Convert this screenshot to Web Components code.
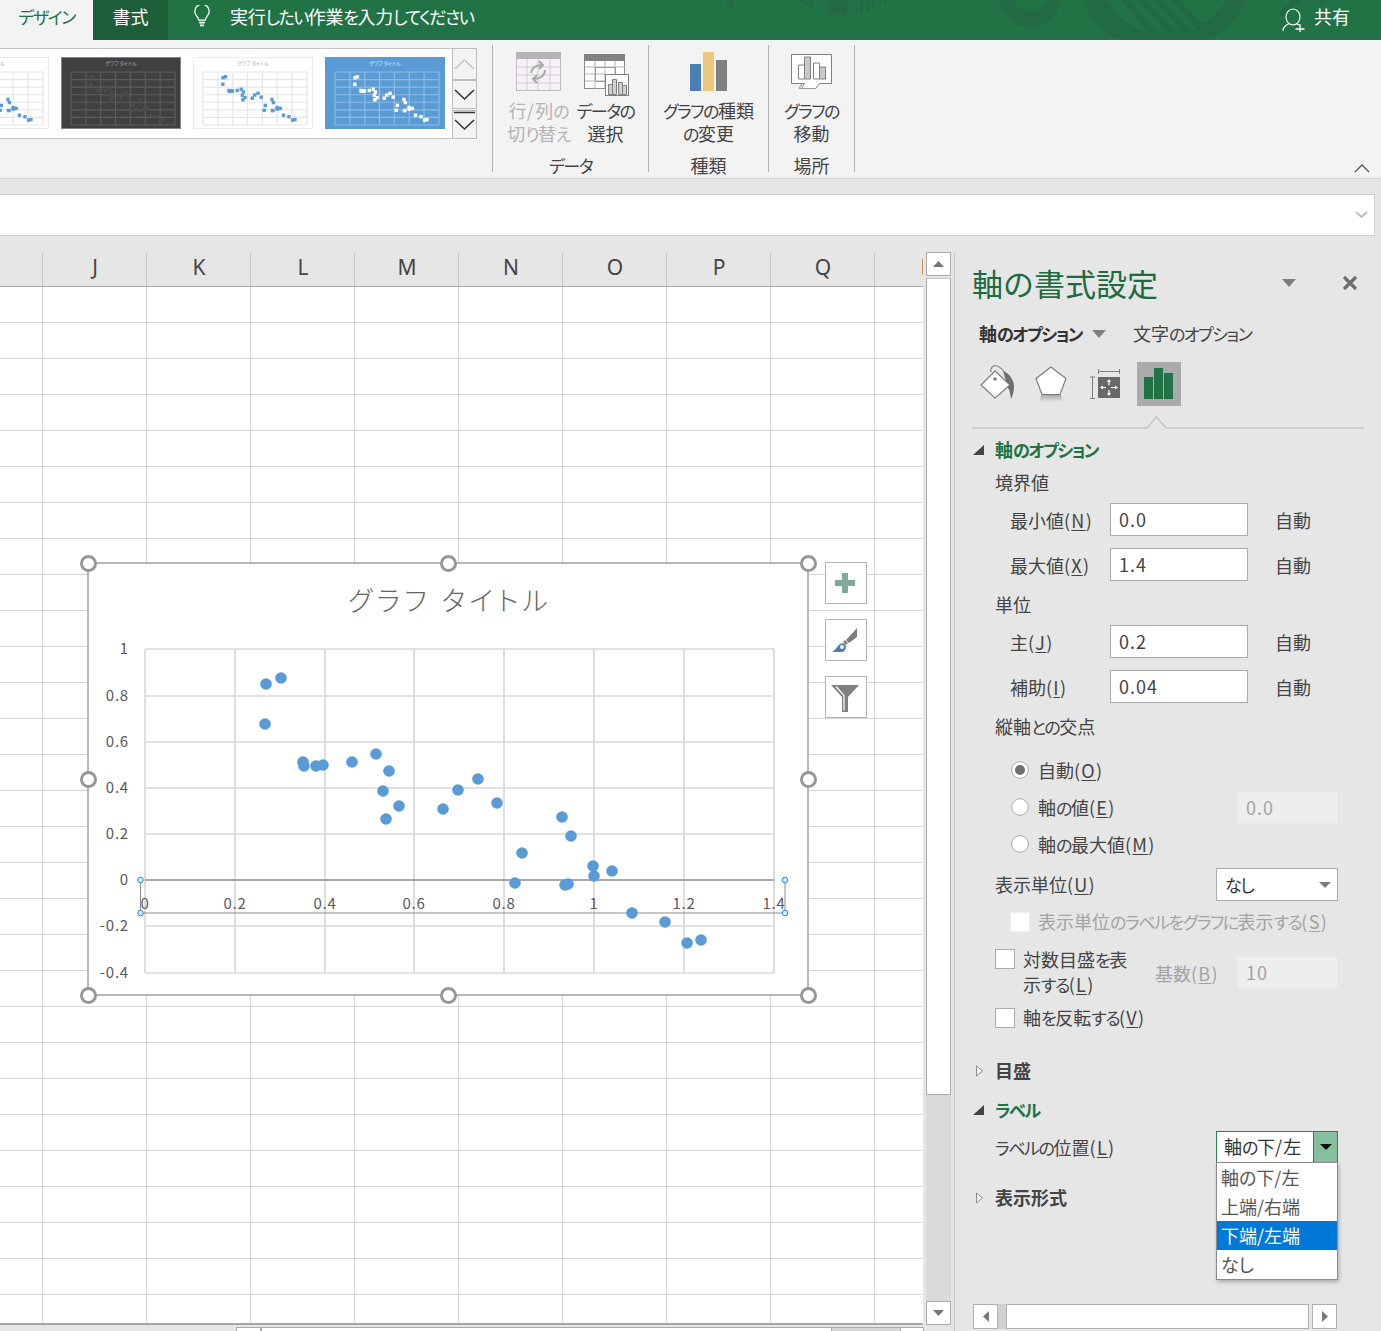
<!DOCTYPE html>
<html lang="ja">
<head>
<meta charset="utf-8">
<title>軸の書式設定</title>
<style>
html, body { margin: 0; height: 100%; overflow: hidden; }
body {
  background: #e6e6e6;
  color: #444;
  font-family: "Noto Sans CJK JP", "Noto Sans", sans-serif;
  font-feature-settings: "palt";
  font-size: 18px;
}
u { text-underline-offset: 2px; }
</style>
</head>
<body>

<x-app>
  <x-titlebar slot="top"></x-titlebar>
  <x-ribbon slot="top"></x-ribbon>
  <x-formula slot="top"></x-formula>
  <x-sheet slot="left"><x-chart></x-chart></x-sheet>
  <x-vscroll slot="left"></x-vscroll>
  <x-sheet-tabs slot="left"></x-sheet-tabs>
  <x-pane slot="right">
    <x-pane-head></x-pane-head>
    <x-section open green style="margin-top:9px">軸のオプション</x-section>
    <x-line style="margin-top:9px">境界値</x-line>
    <x-field value="0.0" style="margin-top:8px">最小値(<u>N</u>)</x-field>
    <x-field value="1.4" style="margin-top:12px">最大値(<u>X</u>)</x-field>
    <x-line style="margin-top:12px">単位</x-line>
    <x-field value="0.2" style="margin-top:8px">主(<u>J</u>)</x-field>
    <x-field value="0.04" style="margin-top:12px">補助(<u>I</u>)</x-field>
    <x-line style="margin-top:12px">縦軸との交点</x-line>
    <x-radio checked style="margin-top:13px">自動(<u>O</u>)</x-radio>
    <x-radio value="0.0" style="margin-top:1px">軸の値(<u>E</u>)</x-radio>
    <x-radio style="margin-top:1px">軸の最大値(<u>M</u>)</x-radio>
    <x-select value="なし" style="margin-top:6px">表示単位(<u>U</u>)</x-select>
    <x-check disabled style="margin-top:7px">表示単位のラベルをグラフに表示する(<u>S</u>)</x-check>
    <x-log-row style="margin-top:12px"></x-log-row>
    <x-check style="margin-top:8px;margin-left:23px">軸を反転する(<u>V</u>)</x-check>
    <x-section style="margin-top:27px">目盛</x-section>
    <x-section open green style="margin-top:15px">ラベル</x-section>
    <x-select value="軸の下/左" open style="margin-top:9px">ラベルの位置(<u>L</u>)</x-select>
    <x-section style="margin-top:23px">表示形式</x-section>
    <x-hscroll></x-hscroll>
  </x-pane>
</x-app>

<script>
// page coordinates of the scatter points, read off the screenshot
const POINTS = [[266,684],[281,678],[265,724],[303,762],[304,766],[316,766],[323,765],[352,762],[376,754],[389,771],[383,791],[399,806],[386,819],[443,809],[458,790],[478,779],[497,803],[562,817],[571,836],[522,853],[515,883],[565,885],[568,884],[593,866],[594,876],[612,871],[632,913],[665,922],[687,943],[701,940]];
const GRID_X = [145,235,325,414,504,594,684,774];
const GRID_Y = [649,696,742,788,834,880,926,973];

// the reference font has narrow kana and wide brackets, so tighten those runs
function narrow(root) {
  const walker = document.createTreeWalker(root, NodeFilter.SHOW_TEXT);
  const nodes = [];
  while (walker.nextNode()) nodes.push(walker.currentNode);
  for (const node of nodes) {
    const parent = node.parentElement;
    if (parent && parent.closest("style,script,svg,.raw")) continue;
    if (!/[\u3041-\u30ff()\/A-Z]/.test(node.data)) continue;
    const frag = document.createDocumentFragment();
    for (const part of node.data.split(/([\u3041-\u30ff]+|[()\/A-Z]+)/)) {
      if (!part) continue;
      if (/^[\u3041-\u30ff]/.test(part)) {
        const s = document.createElement("span");
        s.style.cssText = "font-size:.95em;letter-spacing:-.09em";
        s.textContent = part;
        frag.append(s);
      } else if (/^[()\/A-Z]/.test(part)) {
        const s = document.createElement("span");
        s.style.letterSpacing = ".07em";
        s.textContent = part;
        frag.append(s);
      } else {
        frag.append(part);
      }
    }
    node.replaceWith(frag);
  }
}

function define(name, html, setup) {
  customElements.define(name, class extends HTMLElement {
    constructor() {
      super();
      this.attachShadow({ mode: "open" });
    }
    connectedCallback() {
      this.shadowRoot.innerHTML = typeof html === "function" ? html(this) : html;
      narrow(this.shadowRoot);
      if (setup) setup(this);
    }
  });
}

define("x-app", `<style>
:host { display: flex; flex-direction: column; width: 1381px; height: 1331px; overflow: hidden; }
#main { display: flex; flex: 1; padding-top: 16px; min-height: 0; }
#left { display: flex; flex-wrap: wrap; width: 954px; align-content: flex-start; }
#right { flex: 1; min-width: 0; border-left: 1px solid #c6c6c6; margin-left: 0; }
</style>
<slot name="top"></slot>
<div id="main">
  <div id="left"><slot name="left"></slot></div>
  <div id="right"><slot name="right"></slot></div>
</div>`);

define("x-titlebar", `<style>
:host { display: flex; align-items: center; height: 40px; background: #217346; color: #fff; position: relative; overflow: hidden; font-size: 18px; }
svg.bg { position: absolute; left: 0; top: 0; }
.tab { display: flex; align-items: center; justify-content: center; box-sizing: border-box; height: 40px; padding-bottom: 8px; position: relative; }
#design { width: 93px; background: #f3f3f3; color: #217346; }
#format { width: 75px; background: #1b5e38; }
#bulb { margin-left: 25px; position: relative; top: -3px; }
#tell { margin-left: 19px; position: relative; top: -4px; white-space: nowrap; letter-spacing: -.25px; }
#share { margin-left: auto; margin-right: 31px; display: flex; align-items: center; gap: 8px; position: relative; }
#share span { position: relative; top: -4px; }
</style>
<svg class="bg" width="1381" height="40" viewBox="0 0 1381 40">
  <g fill="#226a43">
    <rect x="727" y="0" width="6" height="7"/>
    <path d="M797 0h16v9z"/>
    <path d="M828 0h19v15l-19-1z"/>
    <path d="M860 0h3v13h-3zM866 0h3v11h-3zM872 0h3v9h-3zM878 0h3v5h-3zM884 0h2v3h-2z"/>
    <path d="M1000 0a30 27 0 0 0 60 0h-14a16 10 0 0 1-32 0z"/>
    <path d="M1083 0c6 22 26 38 40 40h82c20-6 34-22 40-40h-18c-8 10-16 18-24 24l-24-24h-8l27 30h-7l-30-30h-8l30 31h-7l-31-31h-8l30 32-8 0-30-32h-8l28 33c-16-4-34-18-42-33z"/>
    <path d="M1292 0h10l-18 17-5-5z"/>
    <path d="M1318 0h10l-6 6z"/>
  </g>
</svg>
<div class="tab" id="design">デザイン</div>
<div class="tab" id="format">書式</div>
<svg id="bulb" width="18" height="24" viewBox="0 0 22 30" fill="none" stroke="#fff" stroke-width="1.6">
  <path d="M7 19c0-4-5-6-5-11a8.8 8.8 0 0 1 18 0c0 5-5 7-5 11z"/>
  <path d="M7.500 22h7M8.500 25.500h5" stroke-width="2"/>
</svg>
<div id="tell">実行したい作業を入力してください</div>
<div id="share">
  <svg width="24" height="24" viewBox="0 0 24 24" fill="none" stroke="#fff" stroke-width="1.1">
    <ellipse cx="11" cy="9" rx="7" ry="8"/>
    <path d="M1 23c0-4 3-6 6-7.500M15 16l2 1"/>
    <path d="M18 16v9M13.500 21h9" stroke-width="1.3"/>
  </svg>
  <span>共有</span>
</div>`);

// small previews of the chart style gallery
define("x-thumb", (el) => {
  const bg = el.getAttribute("bg"), grid = el.getAttribute("grid"), dot = el.getAttribute("dot"), edge = el.getAttribute("edge"), ink = el.getAttribute("ink");
  const sx = x => 10 + (x - 145) * 104 / 629, sy = y => 15 + (y - 649) * 53 / 324;
  const vl = GRID_X.map(x => `<path d="M${sx(x)} 15V68"/>`).join("");
  const hl = GRID_Y.map(y => `<path d="M10 ${sy(y)}H114"/>`).join("");
  const dots = POINTS.map(p => `<rect x="${sx(p[0]) - 1.7}" y="${sy(p[1]) - 1.7}" width="3.4" height="3.4" fill="${dot}"/>`).join("");
  return `<style>:host { display: block; flex: none; width: 120px; height: 72px; }</style>
  <svg width="120" height="72" viewBox="0 0 120 72">
    <rect x=".5" y=".5" width="119" height="71" fill="${bg}" stroke="${edge}"/>
    <text x="60" y="8" text-anchor="middle" font-size="5" fill="${ink}">グラフ タイトル</text>
    <g stroke="${grid}" stroke-width="1.200" fill="none">${vl}${hl}</g>
    ${dots}
  </svg>`;
});

define("x-ribbon", `<style>
:host { display: flex; height: 139px; background: #f3f3f3; border-bottom: 1px solid #d2d2d2; box-sizing: border-box; padding-top: 5px; }
#gallery { display: flex; width: 452px; height: 91px; margin-top: 3px; background: #fff; border: solid #c6c6c6; border-width: 1px 0 1px 0; box-sizing: border-box; overflow: hidden; padding: 8px 0 0; gap: 12px; }
#gallery > :first-child { margin-left: -71px; }
#arrows { display: flex; flex-direction: column; width: 25px; margin-top: 3px; margin-right: 15px; }
.arrow { box-sizing: border-box; width: 25px; background: #f3f3f3; border: 1px solid #bdbdbd; }
.arrow svg { display: block; }
.group { position: relative; box-sizing: border-box; height: 127px; border-left: 1px solid #b5b5b5; display: flex; justify-content: center; }
.group.last { border-right: 1px solid #b5b5b5; }
.glabel { position: absolute; left: 0; right: 0; top: 108px; height: 24px; line-height: 24px; text-align: center; font-size: 18px; color: #444; }
.btn { width: 67px; text-align: center; font-size: 18px; line-height: 23px; white-space: nowrap; display: flex; flex-direction: column; align-items: center; }
.btn.wide { width: 119px; }
.btn svg { display: block; flex: none; margin-bottom: -1px; }
.off { color: #b4b4b4; }
#collapse { margin-left: auto; margin-right: 11px; margin-top: 118px; }
</style>
<div id="gallery">
  <x-thumb bg="#fff" grid="#e6e6e6" dot="#5b9bd5" edge="#e8e8e8" ink="#aaa"></x-thumb>
  <x-thumb bg="#404040" grid="#5c5c5c" dot="#4b4b4b" edge="#858585" ink="#aaa"></x-thumb>
  <x-thumb bg="#fff" grid="#e6e6e6" dot="#5b9bd5" edge="#ececec" ink="#aaa"></x-thumb>
  <x-thumb bg="#5b9bd5" grid="#8cbbe4" dot="#fff" edge="#5b9bd5" ink="#dcebf8"></x-thumb>
</div>
<div id="arrows">
  <div class="arrow" style="height:32px"><svg width="23" height="30" viewBox="0 0 23 30" fill="none" stroke="#c4c4c4" stroke-width="1.500"><path d="M2 20l9.500-9 9.500 9"/></svg></div>
  <div class="arrow" style="height:29px;margin-bottom:1px"><svg width="23" height="27" viewBox="0 0 23 27" fill="none" stroke="#333" stroke-width="1.500"><path d="M2 9l9.500 9 9.500-9"/></svg></div>
  <div class="arrow" style="height:29px"><svg width="23" height="27" viewBox="0 0 23 27" fill="none" stroke="#333" stroke-width="1.500"><path d="M1 1.500h21M2 9l9.500 9 9.500-9"/></svg></div>
</div>
<div class="group" style="width:156px;padding-left:3px">
  <div class="btn off">
    <svg width="67" height="55" viewBox="505 45 67 55">
      <rect x="516.500" y="52.500" width="44" height="38" fill="#f6f1f6" stroke="#bcbcbc"/>
      <rect x="516" y="52" width="45" height="7" fill="#b6b4b6"/>
      <path d="M527 59v31M538 59v31M550 59v31M517 67h43M517 75h43M517 83h43" stroke="#cfcfcf" fill="none"/>
      <path d="M531 73c1-6 6-8 11-8M539 61l4 4-4 4M545 70c0 6-5 9-11 9M537 75l-4 4 4 4" stroke="#a8a8a8" stroke-width="2" fill="none"/>
    </svg>
    <div>行/列の<br>切り替え</div>
  </div>
  <div class="btn">
    <svg width="67" height="55" viewBox="572 45 67 55">
      <rect x="584.500" y="54.500" width="40" height="34" fill="#fff" stroke="#8a8a8a"/>
      <rect x="584" y="54" width="41" height="7" fill="#808080"/>
      <path d="M595 61v28M605 61v28M615 61v14M585 67h40M585 74h20M585 81h20" stroke="#b4b4b4" fill="none"/>
      <path d="M595.500 81.500v-14h20v7M595.500 81.500h10" stroke="#e08a3c" fill="none"/>
      <rect x="605.500" y="74.500" width="23" height="21" fill="#fff" stroke="#808080"/>
      <path d="M608.500 94.500v-10h4v10zM612.500 94.500v-15h4v15zM618.500 94.500v-12h4v12zM622.500 94.500v-9h4v9z" fill="#d0d0d0" stroke="#808080"/>
    </svg>
    <div>データの<br>選択</div>
  </div>
  <div class="glabel">データ</div>
</div>
<div class="group" style="width:120px">
  <div class="btn wide">
    <svg width="119" height="55" viewBox="649 45 119 55">
      <rect x="690" y="64" width="11" height="27" fill="#4a7eb5"/>
      <rect x="703" y="52" width="11" height="39" fill="#edc77f"/>
      <rect x="716" y="60" width="11" height="31" fill="#808080"/>
    </svg>
    <div>グラフの種類<br>の変更</div>
  </div>
  <div class="glabel">種類</div>
</div>
<div class="group last" style="width:87px">
  <div class="btn" style="width:85px">
    <svg width="85" height="55" viewBox="769 45 85 55">
      <path d="M791.500 54.500h40v29h-12l-4 5h-14l3-5h-13z" fill="#fff" stroke="#808080"/>
      <path d="M802 83.500l-3 5h16" fill="none" stroke="#999"/>
      <path d="M798.500 79v-14h6v14zM813.500 79v-16h6v16z" fill="#fff" stroke="#808080"/>
      <path d="M804.500 79v-22h6v22zM819.500 79v-12h6v12z" fill="#c8c8c8" stroke="#808080"/>
    </svg>
    <div>グラフの<br>移動</div>
  </div>
  <div class="glabel">場所</div>
</div>
<svg id="collapse" width="16" height="10" viewBox="0 0 16 10" fill="none" stroke="#555" stroke-width="1.300"><path d="M1 9l7-7 7 7"/></svg>`);

define("x-formula", `<style>
:host { display: block; height: 57px; box-sizing: border-box; background: #e6e6e6; padding-top: 15px; padding-right: 6px; }
#box { position: relative; height: 42px; box-sizing: border-box; background: #fff; border: solid #d0d0d0; border-width: 1px 1px 1px 0; }
svg { position: absolute; right: 6px; top: 16px; }
</style>
<div id="box"><svg width="13" height="8" viewBox="0 0 13 8" fill="none" stroke="#bdbdbd" stroke-width="2"><path d="M1 1l5.500 5 5.500-5"/></svg></div>`);

define("x-sheet", () => {
  const cols = ["", "J", "K", "L", "M", "N", "O", "P", "Q", "R"];
  const cells = cols.map((c, i) => `<div class="col raw" style="width:${i ? 104 : 43}px">${c}</div>`).join("");
  return `<style>
:host { display: flex; flex-direction: column; position: relative; width: 924px; height: 1073px; box-sizing: border-box; }
#head { display: flex; height: 35px; flex: none; overflow: hidden; background: #e6e6e6; border-bottom: 1px solid #ababab; box-sizing: border-box; width: 923px; }
.col { flex: none; box-sizing: border-box; border-right: 1px solid #c4c4c4; padding-left: 1px; text-align: center; font-size: 21px; line-height: 31px; color: #444; font-family: "Noto Sans", sans-serif; }
#cells { flex: 1; width: 923px; box-sizing: border-box; background-color: #fff; border-bottom: 2px solid #a6a6a6;
  background-image: linear-gradient(to right, #d6d6d6 1px, transparent 1px), linear-gradient(to bottom, #d6d6d6 1px, transparent 1px);
  background-size: 104px 36px; background-position: 42px 0, 0 35px; position: relative; }
::slotted(x-chart) { position: absolute; left: 78px; top: 266px; }
</style>
<div id="head">${cells}</div>
<div id="cells"><slot></slot></div>`;
});

define("x-chart", () => {
  const grid = GRID_X.map(x => `<path d="M${x} 649V973"/>`).join("") + GRID_Y.filter(y => y !== 880).map(y => `<path d="M145 ${y}H774"/>`).join("");
  const ylab = ["1", "0.8", "0.6", "0.4", "0.2", "0", "-0.2", "-0.4"].map((t, i) => `<text x="129" y="${GRID_Y[i] + 5}" text-anchor="end">${t}</text>`).join("");
  const xlab = ["0", "0.2", "0.4", "0.6", "0.8", "1", "1.2", "1.4"].map((t, i) => `<text x="${GRID_X[i]}" y="909" text-anchor="middle">${t}</text>`).join("");
  const dots = POINTS.map(p => `<circle cx="${p[0]}" cy="${p[1]}" r="5.800"/>`).join("");
  const handles = [[88,563],[448,563],[808,563],[88,779],[808,779],[88,995],[448,995],[808,995]].map(p => `<circle cx="${p[0] + .5}" cy="${p[1] + .5}" r="7"/>`).join("");
  const axis = [[140.500,880],[785,880],[140.500,913],[785,913]].map(p => `<circle cx="${p[0]}" cy="${p[1]}" r="2.800"/>`).join("");
  return `<style>
:host { display: block; width: 802px; height: 452px; }
svg { display: block; }
text { font-family: "Noto Sans CJK JP", "Noto Sans", sans-serif; }
</style>
<svg width="802" height="452" viewBox="78 553 802 452">
  <rect x="88" y="563" width="720" height="432" fill="#fff" stroke="#a0a0a0" stroke-width="1.500"/>
  <text x="450" y="611" text-anchor="middle" font-size="27" font-weight="300" letter-spacing="4.300" fill="#666">グラフ タイトル</text>
  <g stroke="#d9d9d9" stroke-width="1.700" fill="none">${grid}</g>
  <path d="M145 880H774" stroke="#8c8c8c" stroke-width="1.500"/>
  <g font-size="15" fill="#595959" letter-spacing=".8">${ylab}${xlab}</g>
  <path d="M140.500 880V913H785V880" fill="none" stroke="#8c8c8c" stroke-width="1"/>
  <g fill="#5b9bd5">${dots}</g>
  <g fill="#d6ebfb" stroke="#1e8ce0" stroke-width="1">${axis}</g>
  <g fill="#fff" stroke="#979797" stroke-width="3">${handles}</g>
  <g fill="#fff" stroke="#b4b4b4">
    <rect x="825.500" y="562.500" width="41" height="41"/>
    <rect x="825.500" y="619.500" width="41" height="41"/>
    <rect x="825.500" y="676.500" width="41" height="41"/>
  </g>
  <path d="M842 573h6v7h7v6h-7v7h-6v-7h-7v-6h7z" fill="#7fab98"/>
  <path d="M857 628v9l-8 6-3-3z" fill="#7f7f7f"/>
  <path d="M845 640l3 3-2 2-3-3z" fill="#7f7f7f"/>
  <path d="M832 652c3-1 5-6 8-8 3-2 6 0 6 3 0 2-1 3-3 5z" fill="#4a7eb5"/>
  <circle cx="842" cy="647" r="2" fill="#fff"/>
  <path d="M831 685h28l-11 12v15h-6v-15z" fill="#808080"/>
  <path d="M836 686.500l8 9v15" stroke="#fff" stroke-width="1.200" fill="none"/>
</svg>`;
});

define("x-vscroll", `<style>
:host { display: flex; flex-direction: column; width: 25px; height: 1073px; margin-left: 2px; margin-right: 3px; }
.b { box-sizing: border-box; width: 25px; height: 24px; background: #fff; border: 1px solid #ababab; flex: none; display: flex; align-items: center; justify-content: center; }
#thumb { box-sizing: border-box; flex: none; height: 817px; margin-top: 2px; background: #fff; border: 1px solid #ababab; border-top-color: #c8c8c8; width: 25px; }
#track { flex: 1; background: #dadada; width: 25px; }
</style>
<div class="b"><svg width="11" height="6" viewBox="0 0 11 6"><path d="M5.500 0L11 6H0z" fill="#777"/></svg></div>
<div id="thumb"></div>
<div id="track"></div>
<div class="b"><svg width="11" height="6" viewBox="0 0 11 6"><path d="M0 0h11L5.500 6z" fill="#777"/></svg></div>`);

// bottom strip under the cells, only its top few pixels fit in the window
define("x-sheet-tabs", `<style>
:host { display: flex; width: 924px; height: 24px; margin-top: 2px; padding-left: 236px; box-sizing: border-box; }
div { box-sizing: border-box; height: 24px; background: #fff; border: 1px solid #ababab; }
#track { background: #d6d6d6; border: 0; border-top: 1px solid #ababab; }
</style>
<div style="width:25px"></div>
<div style="width:571px"></div>
<div id="track" style="width:68px"></div>
<div style="width:24px"></div>`);

define("x-pane", `<style>
:host { display: flex; flex-direction: column; position: relative; box-sizing: border-box; height: 1079px; padding: 12px 0 0 17px; }
</style><slot></slot>`);

define("x-pane-head", `<style>
:host { display: block; width: 392px; }
#title { display: flex; align-items: center; height: 42px; color: #1c6b40; font-size: 31px; font-feature-settings: normal; white-space: nowrap; }
#title span { position: relative; top: -3px; }
#title svg { position: relative; top: -2px; }
#title svg:first-of-type { margin-left: auto; margin-right: 46px; }
#title svg:last-of-type { margin-right: 6px; }
#tabs { display: flex; align-items: center; height: 32px; margin-top: 12px; padding-left: 7px; color: #3a3a3a; }
#tabs b { font-weight: 700; font-size: 18px; color: #333; position: relative; top: -1px; }
#tabs svg { margin: 0 27px 0 10px; }
#tabs > span { font-size: 18px; color: #444; position: relative; top: -1px; }
#icons { display: flex; gap: 10px; margin-top: 12px; padding-left: 3px; height: 44px; }
#icons svg { display: block; }
#rule { display: block; margin-top: 10px; }
</style>
<div id="title">
  <span class="raw">軸の書式設定</span>
  <svg width="14" height="8" viewBox="0 0 14 8"><path d="M0 0h14L7 8z" fill="#7d7d7d"/></svg>
  <svg width="16" height="16" viewBox="0 0 16 16" stroke="#6e6e6e" stroke-width="3.200"><path d="M2 2l12 12M14 2L2 14"/></svg>
</div>
<div id="tabs"><b>軸のオプション</b><svg width="14" height="8" viewBox="0 0 14 8"><path d="M0 0h14L7 8z" fill="#808080"/></svg><span>文字のオプション</span></div>
<div id="icons">
  <svg width="44" height="44" viewBox="975 362 44 44">
    <path d="M991 372c-1-5 3-7 6-6 3 1 6 4 8 7" fill="none" stroke="#8a8a8a" stroke-width="1.200"/>
    <path d="M1003 371c6 2 11 9 11 15 0 5-1 9-3 13-1-5-1-9-3-11z" fill="#6f6f6f"/>
    <path d="M995 371l15 14-15 13-14-13z" fill="#fff" stroke="#7c7c7c" stroke-width="1.200"/>
    <circle cx="995" cy="379" r="1.800" fill="#7c7c7c"/>
  </svg>
  <svg width="44" height="44" viewBox="1029 362 44 44">
    <defs><linearGradient id="fade" x1="0" y1="0" x2="0" y2="1"><stop offset="0" stop-color="#a8a8a8"/><stop offset="1" stop-color="#e6e6e6"/></linearGradient></defs>
    <path d="M1041 395h20l2 7h-24z" fill="url(#fade)"/>
    <path d="M1051 367l15 11.500-6 16h-18l-6-16z" fill="#fff" stroke="#7c7c7c" stroke-width="1.200"/>
  </svg>
  <svg width="44" height="44" viewBox="1083 362 44 44">
    <path d="M1098.500 369v5M1098.500 371.500h21M1119.500 369v5M1090 377h5M1092.500 377v21M1090 398.500h5" fill="none" stroke="#808080"/>
    <rect x="1098" y="377" width="22" height="21" fill="#696969"/>
    <path d="M1109 380v15M1101 387.500h16" stroke="#fff" stroke-width="1.200" stroke-dasharray="5 5"/>
    <path d="M1109 379l-2 3h4zM1109 396l-2-3h4zM1100 387.500l3-2v4zM1118 387.500l-3-2v4z" fill="#fff"/>
  </svg>
  <svg width="44" height="44" viewBox="1137 362 44 44">
    <rect x="1137" y="362" width="44" height="44" fill="#ababab"/>
    <path d="M1144 377h9v22h-9zM1154 368h9v31h-9zM1164 373h9v26h-9z" fill="#217346"/>
  </svg>
</div>
<svg id="rule" width="392" height="13" viewBox="0 0 392 13" fill="none" stroke="#c6c6c6" stroke-width="1.500"><path d="M0 12H175L184.500 1 194 12H392"/></svg>`);

define("x-section", (el) => `<style>
:host { display: flex; align-items: center; height: 24px; font-weight: 700; font-size: 18px; color: ${el.hasAttribute("green") ? "#217346" : "#444"}; }
svg { width: 12px; height: 12px; margin-left: 1px; margin-right: 10px; flex: none; }
#t { position: relative; top: -1px; }
</style>
${el.hasAttribute("open")
  ? `<svg viewBox="0 0 12 12"><path d="M11 1v10H0z" fill="#444"/></svg>`
  : `<svg viewBox="0 0 12 12"><path d="M3.500 1l6 5-6 5z" fill="#fff" stroke="#8a8a8a"/></svg>`}
<div id="t"><slot></slot></div>`);

define("x-line", `<style>
:host { display: block; height: 24px; line-height: 22px; margin-left: 23px; font-size: 18px; }
</style><slot></slot>`);

define("x-field", (el) => `<style>
:host { display: flex; align-items: center; height: 33px; padding-left: 38px; font-size: 18px; }
#label { width: 100px; flex: none; white-space: nowrap; }
#input { box-sizing: border-box; width: 138px; height: 33px; background: #fff; border: 1px solid #ababab; padding-left: 8px; line-height: 31px; letter-spacing: 1px; font-feature-settings: normal; color: #444; flex: none; }
#auto { margin-left: 27px; }
</style>
<div id="label"><slot></slot></div>
<div id="input">${el.getAttribute("value")}</div>
<div id="auto">自動</div>`);

define("x-radio", (el) => `<style>
:host { display: flex; align-items: center; height: 36px; padding-left: 39px; font-size: 18px; }
svg { flex: none; margin-right: 9px; }
#spare { box-sizing: border-box; position: absolute; left: 282px; width: 101px; height: 33px; background: #eeeeec; border: 1px solid #e9e9e9; padding-left: 8px; line-height: 31px; color: #a3a3a3; letter-spacing: 1px; font-feature-settings: normal; }
</style>
<svg width="18" height="18" viewBox="0 0 18 18">
  <circle cx="9" cy="9" r="8.300" fill="#fff" stroke="#ababab"/>
  ${el.hasAttribute("checked") ? `<circle cx="9" cy="9" r="5" fill="#6f6f6f"/>` : ""}
</svg>
<div><slot></slot></div>
${el.hasAttribute("value") ? `<div id="spare">${el.getAttribute("value")}</div>` : ""}`);

define("x-select", (el) => {
  const open = el.hasAttribute("open");
  const items = ["軸の下/左", "上端/右端", "下端/左端", "なし"];
  return `<style>
:host { display: flex; align-items: center; position: relative; height: ${open ? 32 : 33}px; padding-left: 23px; font-size: 18px; z-index: ${open ? 5 : 0}; }
#label { width: 221px; flex: none; white-space: nowrap; position: relative; top: ${open ? 0 : -1}px; }
#box { display: flex; align-items: center; justify-content: space-between; box-sizing: border-box; width: 122px; height: 100%; background: #fff; border: 1px solid ${open ? "#2f7d52" : "#ababab"}; padding-left: ${open ? 7 : 8}px; color: #333; flex: none; }
#val { position: relative; top: -1px; white-space: nowrap; }
#btn { display: flex; align-items: center; justify-content: center; width: 24px; height: 100%; box-sizing: border-box; ${open ? "background:#86bf9e; border-left:1px solid #2f7d52;" : ""} }
#list { position: absolute; left: 244px; top: 31px; width: 122px; box-sizing: border-box; background: #fff; border: 1px solid #8a8a8f; box-shadow: 1px 2px 4px rgba(0,0,0,.25); }
.it { height: 29px; line-height: 29px; padding-left: 4px; color: #555; }
.it.on { background: #0078d7; color: #fff; }
</style>
<div id="label"><slot></slot></div>
<div id="box"><div id="val">${el.getAttribute("value")}</div>
  <div id="btn"><svg width="12" height="6" viewBox="0 0 12 6"><path d="M0 0h12L6 6z" fill="${open ? "#111" : "#7d7d7d"}"/></svg></div>
</div>
${open ? `<div id="list">${items.map((t, i) => `<div class="it raw${i === 2 ? " on" : ""}">${t}</div>`).join("")}</div>` : ""}`;
});

define("x-check", (el) => `<style>
:host { display: flex; align-items: center; height: 28px; padding-left: ${el.hasAttribute("disabled") ? 38 : 0}px; font-size: 18px; color: ${el.hasAttribute("disabled") ? "#a3a3a3" : "#444"}; white-space: nowrap; }
#c { box-sizing: border-box; width: 20px; height: 20px; background: #fff; border: 1px solid ${el.hasAttribute("disabled") ? "#eee" : "#ababab"}; margin-right: 8px; flex: none; }
#t { position: relative; top: -1px; }
</style>
<div id="c"></div><div id="t"><slot></slot></div>`);

define("x-log-row", `<style>
:host { display: flex; align-items: flex-start; height: 48px; padding-left: 23px; font-size: 18px; }
#c { box-sizing: border-box; width: 20px; height: 20px; background: #fff; border: 1px solid #ababab; margin-top: 1px; margin-right: 8px; flex: none; }
#t { width: 132px; line-height: 24px; flex: none; margin-top: -1px; }
#base { color: #a3a3a3; width: 82px; line-height: 24px; margin-top: 13px; flex: none; }
#v { box-sizing: border-box; width: 101px; height: 33px; margin-top: 8px; background: #eeeeec; border: 1px solid #e9e9e9; padding-left: 8px; line-height: 31px; color: #a3a3a3; letter-spacing: 1px; font-feature-settings: normal; }
u { text-underline-offset: 2px; }
</style>
<div id="c"></div>
<div id="t">対数目盛を表<br>示する(<u>L</u>)</div>
<div id="base">基数(<u>B</u>)</div>
<div id="v">10</div>`);

define("x-hscroll", `<style>
:host { display: flex; position: absolute; left: 18px; top: 1052px; height: 25px; }
.b { box-sizing: border-box; width: 25px; height: 25px; background: #fff; border: 1px solid #b0b0b0; display: flex; align-items: center; justify-content: center; }
#gap1 { width: 8px; background: #d0d0d0; }
#thumb { box-sizing: border-box; width: 303px; background: #fff; border: 1px solid #b0b0b0; }
#gap2 { width: 3px; }
</style>
<div class="b"><svg width="6" height="11" viewBox="0 0 6 11"><path d="M6 0v11L0 5.500z" fill="#777"/></svg></div>
<div id="gap1"></div>
<div id="thumb"></div>
<div id="gap2"></div>
<div class="b"><svg width="6" height="11" viewBox="0 0 6 11"><path d="M0 0v11l6-5.500z" fill="#777"/></svg></div>`);

narrow(document.querySelector("x-app"));
</script>
</body>
</html>
